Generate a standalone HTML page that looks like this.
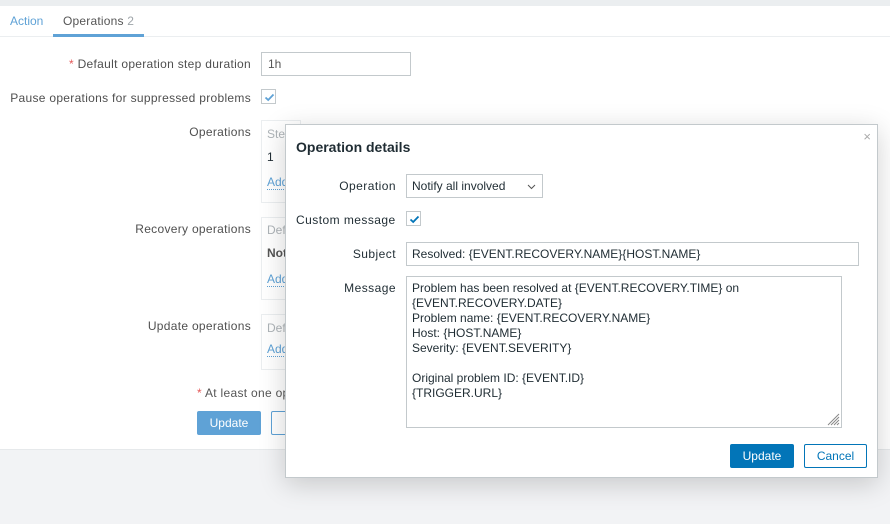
<!DOCTYPE html>
<html><head><meta charset="utf-8"><style>
*{margin:0;padding:0;box-sizing:border-box}
body{width:890px;height:524px;background:#f2f3f5;font-family:"Liberation Sans",Arial,sans-serif;font-size:12px;color:#1f2c33;position:relative;overflow:hidden}
.a{position:absolute;white-space:nowrap}
.top{left:0;top:0;width:890px;height:6px;background:#ebeef0}
.main{left:0;top:6px;width:890px;height:444px;background:#fff;border-bottom:1px solid #e6e9eb}
.lbl{color:#4f4f4f;text-align:right;letter-spacing:0.3px}
.box{border:1px solid #ebeef0;background:#fff}
.inp{border:1px solid #c3c9cc;background:#fff;padding:0 6px}
.cb{width:15px;height:15px;border:1px solid #c3c9cc;background:#fff}
.cb svg{position:absolute;left:2px;top:2px}
.link{color:#5fa2d6;border-bottom:1px dotted #5fa2d6}
.dlg{left:285px;top:124px;width:593px;height:354px;background:#fff;border:1px solid #c3c9cc;box-shadow:0 6px 25px rgba(0,0,0,.18)}
.dl{color:#1f2c33;text-align:right;letter-spacing:0.45px}
</style></head><body>
<div class="a top"></div>
<div class="a main"></div>
<div class="a" style="left:0;top:36px;width:890px;height:1px;background:#ebeef0"></div>
<div class="a" style="left:10px;top:14px;font-size:12px;color:#5fa2d6">Action</div>
<div class="a" style="left:63px;top:14px;color:#555;letter-spacing:0.2px">Operations <span style="color:#9ea4a8">2</span></div>
<div class="a" style="left:53px;top:34px;width:91px;height:3px;background:#5fa2d6"></div>

<div class="a lbl" style="right:639px;top:57px"><span style="color:#e45959">*</span> Default operation step duration</div>
<div class="a inp" style="left:261px;top:52px;width:150px;height:24px;line-height:22px;color:#555">1h</div>
<div class="a lbl" style="right:639px;top:91px">Pause operations for suppressed problems</div>
<div class="a cb" style="left:261px;top:89px"><svg width="11" height="11" viewBox="0 0 11 11"><path d="M1.5 5.5 L4.2 8 L9.5 2.5" stroke="#5fa2d6" stroke-width="1.8" fill="none"/></svg></div>

<div class="a lbl" style="right:639px;top:125px">Operations</div>
<div class="a box" style="left:261px;top:120px;width:40px;height:83px"></div>
<div class="a" style="left:267px;top:127px;color:#aeb4b8">Ste</div>
<div class="a" style="left:267px;top:150px">1</div>
<div class="a link" style="left:267px;top:176px;line-height:13px">Add</div>

<div class="a lbl" style="right:639px;top:222px">Recovery operations</div>
<div class="a box" style="left:261px;top:217px;width:40px;height:83px"></div>
<div class="a" style="left:267px;top:223px;color:#aeb4b8">Def</div>
<div class="a" style="left:267px;top:246px;font-weight:bold;color:#555">Not</div>
<div class="a link" style="left:267px;top:273px;line-height:13px">Add</div>

<div class="a lbl" style="right:639px;top:319px">Update operations</div>
<div class="a box" style="left:261px;top:314px;width:40px;height:56px"></div>
<div class="a" style="left:267px;top:321px;color:#aeb4b8">Def</div>
<div class="a link" style="left:267px;top:343px;line-height:13px">Add</div>

<div class="a" style="left:197px;top:386px;color:#555;letter-spacing:0.3px"><span style="color:#e45959">*</span> At least one op</div>
<div class="a" style="left:197px;top:411px;width:64px;height:24px;background:#5fa2d6;border-radius:2px;color:#fff;text-align:center;line-height:24px">Update</div>
<div class="a" style="left:271px;top:411px;width:30px;height:24px;border:1px solid #5fa2d6;border-radius:2px"></div>

<div class="a dlg">
  <div class="a" style="right:6px;top:4px;color:#aaa;font-size:13px">×</div>
  <div class="a" style="left:10px;top:14px;font-size:14px;font-weight:bold;color:#1f2c33">Operation details</div>
  <div class="a dl" style="right:481px;top:54px">Operation</div>
  <div class="a inp" style="left:120px;top:49px;width:137px;height:24px;line-height:22px;padding-left:5px">Notify all involved<svg class="a" style="left:120px;top:9px" width="9" height="6" viewBox="0 0 9 6"><path d="M1 1 L4.5 4.5 L8 1" stroke="#555" stroke-width="1" fill="none"/></svg></div>
  <div class="a dl" style="left:10px;top:88px">Custom message</div>
  <div class="a cb" style="left:120px;top:86px"><svg width="11" height="11" viewBox="0 0 11 11"><path d="M1.5 5.5 L4.2 8 L9.5 2.5" stroke="#0275b8" stroke-width="1.8" fill="none"/></svg></div>
  <div class="a dl" style="right:481px;top:122px">Subject</div>
  <div class="a inp" style="left:120px;top:117px;width:453px;height:24px;line-height:22px;padding-left:5px">Resolved: {EVENT.RECOVERY.NAME}{HOST.NAME}</div>
  <div class="a dl" style="right:481px;top:156px">Message</div>
  <div class="a inp" style="left:120px;top:151px;width:436px;height:152px;padding:4px 5px;line-height:15px;white-space:pre">Problem has been resolved at {EVENT.RECOVERY.TIME} on
{EVENT.RECOVERY.DATE}
Problem name: {EVENT.RECOVERY.NAME}
Host: {HOST.NAME}
Severity: {EVENT.SEVERITY}

Original problem ID: {EVENT.ID}
{TRIGGER.URL}<svg class="a" style="right:1px;bottom:1px" width="14" height="14" viewBox="0 0 14 14"><path d="M13 2L2 13M13 5L5 13M13 8L8 13M13 11L11 13" stroke="#888" stroke-width="1"/></svg></div>
  <div class="a" style="left:444px;top:319px;width:64px;height:24px;background:#0275b8;border-radius:2px;color:#fff;text-align:center;line-height:24px">Update</div>
  <div class="a" style="left:518px;top:319px;width:63px;height:24px;border:1px solid #0275b8;border-radius:2px;color:#0275b8;text-align:center;line-height:22px">Cancel</div>
</div>
</body></html>
